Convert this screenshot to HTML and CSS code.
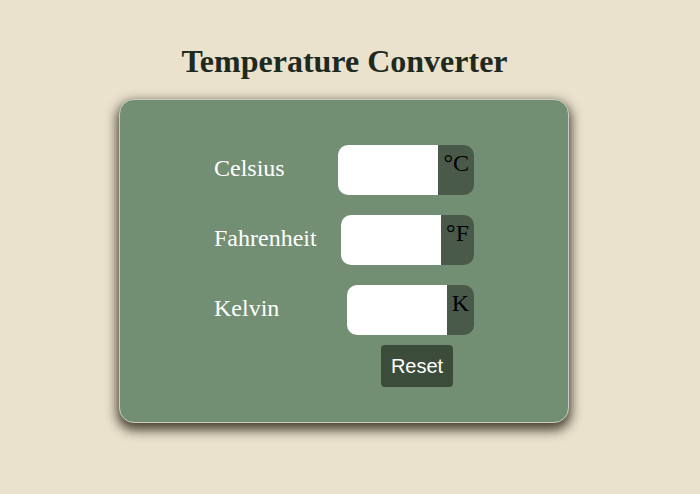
FILE: index.html
```html
<!DOCTYPE html>
<html>
<head>
<meta charset="utf-8">
<link rel="stylesheet" href="styles.css">
</head>
<body>
<h1 class="title">Temperature Converter</h1>
<div class="card">
  <div class="form">
    <div class="row">
      <label class="label">Celsius</label>
      <div class="group"><input class="field" type="text"><span class="unit">°C</span></div>
    </div>
    <div class="row">
      <label class="label">Fahrenheit</label>
      <div class="group"><input class="field" type="text"><span class="unit">°F</span></div>
    </div>
    <div class="row">
      <label class="label">Kelvin</label>
      <div class="group"><input class="field" type="text"><span class="unit">K</span></div>
    </div>
    <button class="reset">Reset</button>
  </div>
</div>
</body>
</html>
```
FILE: styles.css
```css
html, body {
  margin: 0;
  padding: 0;
  background: #ebe2cd;
  font-family: "Liberation Serif", "Times New Roman", serif;
}
body {
  box-sizing: border-box;
  min-height: 494px;
  padding-top: 43px;
  padding-bottom: 40px;
}
.title {
  margin: 0 0 19px 0;
  text-align: center;
  font-size: 32px;
  font-weight: bold;
  color: #1f2a1f;
  line-height: normal;
  padding-right: 11px;
}
.card {
  box-sizing: border-box;
  width: 450px;
  height: 324px;
  margin-left: 119px;
  background: #738f73;
  border: 1px solid #c9ccc0;
  border-radius: 15px;
  box-shadow: 0 5px 12px 2px rgba(30, 22, 10, 0.8);
  padding: 45px 0 0 0;
}
.form {
  width: 260px;
  margin: 0 auto;
  display: flex;
  flex-direction: column;
  gap: 20px;
}
.row {
  display: flex;
  justify-content: space-between;
  align-items: center;
  height: 50px;
}
.label {
  color: #ffffff;
  font-size: 24px;
  margin-top: -4px;
}
.group {
  display: flex;
  height: 50px;
}
.field {
  box-sizing: border-box;
  width: 100px;
  height: 50px;
  border: none;
  outline: none;
  background: #ffffff;
  border-radius: 10px 0 0 10px;
  margin: 0;
  padding: 0;
}
.unit {
  background: #4a5a4a;
  color: #000000;
  font-size: 24px;
  padding: 5px 5px 0 5px;
  line-height: normal;
  border-radius: 0 10px 10px 0;
}
.reset {
  align-self: flex-start;
  margin-left: 167px;
  margin-top: -10px;
  width: 72px;
  height: 42px;
  background: #3b4d3a;
  color: #ffffff;
  border: none;
  border-radius: 4px;
  font-family: "Liberation Sans", Arial, sans-serif;
  font-size: 20px;
  padding: 0;
}
```
